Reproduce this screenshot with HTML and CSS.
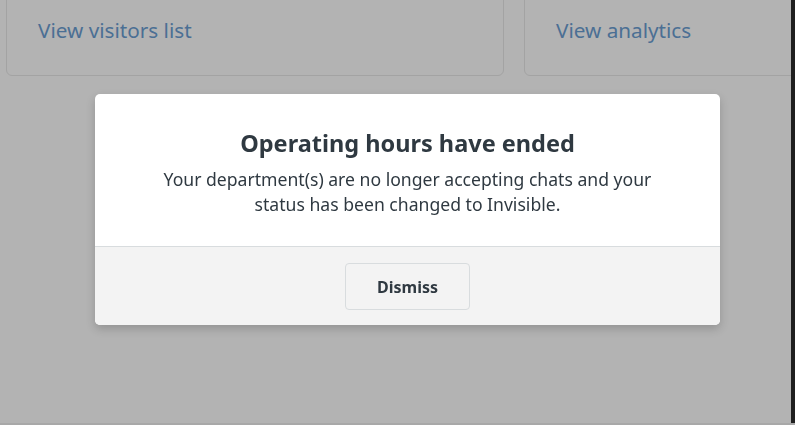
FILE: index.html
```html
<!DOCTYPE html>
<html lang="en">
<head>
<meta charset="utf-8">
<link rel="stylesheet" href="styles.css">
<title>Operating hours have ended</title>
</head>
<body>
<div class="page">
  <main class="content">
    <div class="cards">
      <div class="card card-left"><a class="card-link" href="#">View visitors list</a></div>
      <div class="card card-right"><a class="card-link" href="#">View analytics</a></div>
    </div>
  </main>
  <div class="edge"></div>
</div>
<div class="modal" role="dialog" aria-labelledby="modal-title">
  <div class="modal-body">
    <h2 class="modal-title" id="modal-title">Operating hours have ended</h2>
    <p class="modal-text">Your department(s) are no longer accepting chats and your<br>status has been changed to Invisible.</p>
  </div>
  <div class="modal-footer">
    <button class="btn" type="button">Dismiss</button>
  </div>
</div>
</body>
</html>
```
FILE: styles.css
```css
html, body {
  margin: 0;
  padding: 0;
  height: 100%;
  overflow: hidden;
}
body {
  background: #b3b3b3;
  font-family: "Noto Sans", "Open Sans", sans-serif;
  color: #2f3941;
}
.page {
  display: flex;
  height: 425px;
  border-bottom: 2px solid #a8a8a8;
  box-sizing: border-box;
}
.content {
  flex: 1;
  overflow: hidden;
}
.cards {
  display: flex;
  gap: 20px;
  padding-left: 6px;
  margin-top: -20px;
}
.card {
  height: 96px;
  border: 1px solid #a3a3a3;
  border-radius: 6px;
  box-sizing: border-box;
  padding: 37px 0 0 31px;
}
.card-left {
  width: 498px;
  flex: none;
}
.card-right {
  flex: 1;
  margin-right: -10px;
}
.card-link {
  font-size: 20.7px;
  line-height: 24px;
  color: #4b6f94;
  text-decoration: none;
}
.edge {
  width: 4px;
  background: #1f1f1f;
}
.modal {
  position: fixed;
  left: 95px;
  top: 94px;
  width: 625px;
  background: #fff;
  border-radius: 5px;
  box-shadow: 0 4px 10px rgba(0, 0, 0, 0.18);
  overflow: hidden;
}
.modal-body {
  padding: 34px 20px 0;
  height: 153px;
  box-sizing: border-box;
  text-align: center;
  border-bottom: 1px solid #d8dcde;
}
.modal-title {
  margin: 0 0 9px;
  font-size: 23.5px;
  line-height: 30px;
  font-weight: 700;
  color: #2f3941;
}
.modal-text {
  margin: 0;
  font-size: 17.6px;
  line-height: 25px;
  color: #2f3941;
}
.modal-footer {
  background: #f3f3f3;
  height: 78px;
  display: flex;
  justify-content: center;
  align-items: flex-start;
  padding-top: 16px;
  box-sizing: border-box;
}
.btn {
  width: 125px;
  height: 47px;
  border: 1px solid #d8dcde;
  border-radius: 4px;
  background: #f3f3f3;
  font-family: inherit;
  font-size: 16px;
  font-weight: 700;
  color: #2f3941;
  padding: 0;
}
```
